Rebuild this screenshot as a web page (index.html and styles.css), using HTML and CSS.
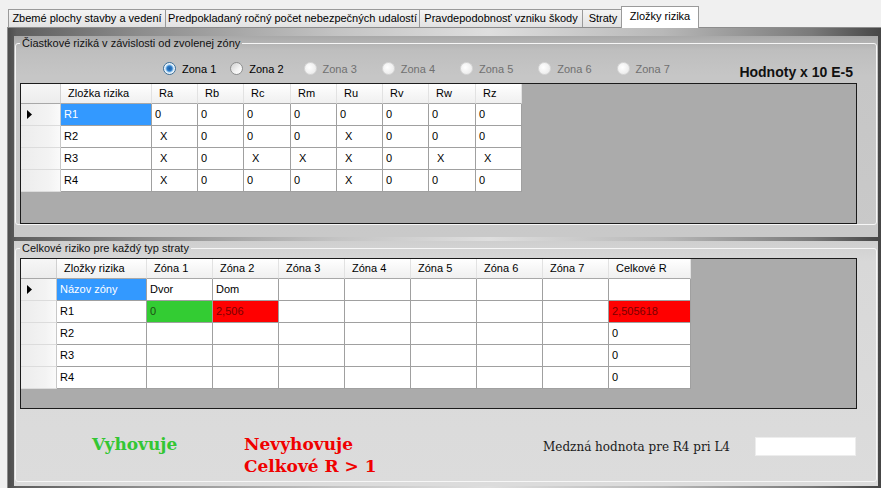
FILE: index.html
```html
<!DOCTYPE html>
<html lang="sk">
<head>
<meta charset="UTF-8">
<meta name="viewport" content="width=device-width, initial-scale=1.0">
<title>Zložky rizika</title>
<link rel="stylesheet" href="styles.css">
</head>
<body>
<div class="tabs">
  <div class="tab tab-plochy">Zbemé plochy stavby a vedení</div>
  <div class="tab tab-udalosti">Predpokladaný ročný počet nebezpečných udalostí</div>
  <div class="tab tab-skoda">Pravdepodobnosť vzniku škody</div>
  <div class="tab tab-straty">Straty</div>
  <div class="tab tab-active">Zložky rizika</div>
</div>

<div class="page">
  <!-- horna skupina: ciastkove rizika -->
  <div class="group group-zones">
    <fieldset>
      <legend>Čiastkové riziká v závislosti od zvolenej zóny</legend>
      <div class="zone-bar">
        <span class="radio checked"><span class="dot"></span>Zona 1</span>
        <span class="radio"><span class="dot"></span>Zona 2</span>
        <span class="radio disabled"><span class="dot"></span>Zona 3</span>
        <span class="radio disabled"><span class="dot"></span>Zona 4</span>
        <span class="radio disabled"><span class="dot"></span>Zona 5</span>
        <span class="radio disabled"><span class="dot"></span>Zona 6</span>
        <span class="radio disabled"><span class="dot"></span>Zona 7</span>
        <span class="units">Hodnoty x 10 E-5</span>
      </div>
      <div class="grid grid-parts">
        <div class="row head">
          <div class="rh"></div><div>Zložka rizika</div><div>Ra</div><div>Rb</div><div>Rc</div><div>Rm</div><div>Ru</div><div>Rv</div><div>Rw</div><div>Rz</div>
        </div>
        <div class="row">
          <div class="rh"><svg width="5" height="9" viewBox="0 0 5 9"><polygon points="0,0 5,4.5 0,9" fill="#000"/></svg></div>
          <div class="sel">R1</div><div>0</div><div>0</div><div>0</div><div>0</div><div>0</div><div>0</div><div>0</div><div>0</div>
        </div>
        <div class="row">
          <div class="rh"></div>
          <div>R2</div><div class="x">X</div><div>0</div><div>0</div><div>0</div><div class="x">X</div><div>0</div><div>0</div><div>0</div>
        </div>
        <div class="row">
          <div class="rh"></div>
          <div>R3</div><div class="x">X</div><div>0</div><div class="x">X</div><div class="x">X</div><div class="x">X</div><div>0</div><div class="x">X</div><div class="x">X</div>
        </div>
        <div class="row">
          <div class="rh"></div>
          <div>R4</div><div class="x">X</div><div>0</div><div>0</div><div>0</div><div class="x">X</div><div>0</div><div>0</div><div>0</div>
        </div>
      </div>
    </fieldset>
  </div>

  <!-- dolna skupina: celkove riziko -->
  <div class="group group-total">
    <fieldset>
      <legend>Celkové riziko pre každý typ straty</legend>
      <div class="grid grid-total">
        <div class="row head">
          <div class="rh"></div><div>Zložky rizika</div><div>Zóna 1</div><div>Zóna 2</div><div>Zóna 3</div><div>Zóna 4</div><div>Zóna 5</div><div>Zóna 6</div><div>Zóna 7</div><div>Celkové R</div>
        </div>
        <div class="row">
          <div class="rh"><svg width="5" height="9" viewBox="0 0 5 9"><polygon points="0,0 5,4.5 0,9" fill="#000"/></svg></div>
          <div class="sel">Názov zóny</div><div>Dvor</div><div>Dom</div><div></div><div></div><div></div><div></div><div></div><div></div>
        </div>
        <div class="row">
          <div class="rh"></div>
          <div>R1</div><div class="ok">0</div><div class="bad">2,506</div><div></div><div></div><div></div><div></div><div></div><div class="bad">2,505618</div>
        </div>
        <div class="row">
          <div class="rh"></div>
          <div>R2</div><div></div><div></div><div></div><div></div><div></div><div></div><div></div><div>0</div>
        </div>
        <div class="row">
          <div class="rh"></div>
          <div>R3</div><div></div><div></div><div></div><div></div><div></div><div></div><div></div><div>0</div>
        </div>
        <div class="row">
          <div class="rh"></div>
          <div>R4</div><div></div><div></div><div></div><div></div><div></div><div></div><div></div><div>0</div>
        </div>
      </div>
      <div class="verdict">
        <div class="verdict-ok">Vyhovuje</div>
        <div class="verdict-fail">Nevyhovuje<br>Celkové R &gt; 1</div>
        <div class="limit">
          <span class="limit-label">Medzná hodnota pre R4 pri L4</span>
          <input type="text" class="limit-input">
        </div>
      </div>
    </fieldset>
  </div>
</div>
</body>
</html>
```

FILE: styles.css
```css
body {
  margin: 0;
  width: 881px;
  height: 488px;
  overflow: hidden;
  background-color: #f0f0f0;
  font-family: 'Liberation Sans', Arial, sans-serif;
  font-size: 11px;
  color: #000;
}

/* zalozky */
.tabs {
  display: flex;
  align-items: flex-end;
  height: 20px;
  padding: 7px 0 0 8px;
}

.tab {
  box-sizing: border-box;
  height: 18px;
  line-height: 17px;
  text-align: center;
  white-space: nowrap;
  border: 1px solid #9a9a9a;
  border-bottom: none;
  margin-left: -1px;
  background: linear-gradient(#f4f4f4, #e2e2e2);
}

.tab:first-child {
  margin-left: 0;
}

.tab-plochy { width: 158px; }
.tab-udalosti { width: 255px; }
.tab-skoda { width: 164px; }
.tab-straty { width: 42px; }

.tab-active {
  width: 78px;
  height: 22px;
  line-height: 19px;
  margin: 0 -2px -1px -3px;
  background: #fff;
  position: relative; /* aby prekryla hornu ciaru stranky */
  z-index: 1;
}

/* stranka s tmavym ramom */
.page {
  box-sizing: border-box;
  height: 461px;
  margin-left: 7px;
  border-top: 1px solid #8d8d8d;
  border-left: 1px solid #8d8d8d;
  padding: 5px 3px 5px 6px;
  background: linear-gradient(to right, #4c4c4c 0, #5e5e5e 1%, #8c8c8c 15%, #c4c4c4 38%, #dedede 55%, #b8b8b8 75%, #7a7a7a 92%, #464646 100%);
}

.group {
  box-sizing: border-box;
}

.group-zones {
  height: 201px;
  background: linear-gradient(#a9a9a9, #bebebe 14px, #c6c6c6 40px, #c9c9c9);
}

.group-total {
  height: 245px;
  margin-top: 4px;
  background: linear-gradient(#cfcfcf, #d8d8d8 20px, #dcdcdc);
}

fieldset {
  margin: 3px 1px 1px;
  padding: 0;
  border: 1px solid #f6f6f6;
  border-radius: 3px;
}

legend {
  margin-left: 4px;
  padding: 0 2px;
  font-size: 11px;
  line-height: 14px;
  color: #111;
}

/* prepinace zon */
.zone-bar {
  box-sizing: border-box;
  display: flex;
  align-items: center;
  height: 33px;
  padding: 4px 0 0 147px;
}

.radio {
  display: flex;
  align-items: center;
  gap: 6px;
  margin-right: 25px;
  white-space: nowrap;
}

.radio:first-child {
  margin-right: 14px;
}

.radio:nth-child(2) {
  margin-right: 20px;
}

.dot {
  box-sizing: border-box;
  width: 13px;
  height: 13px;
  border-radius: 50%;
  border: 1px solid #8e8f8f;
  background: linear-gradient(135deg, #cfcfcf, #f4f4f4 60%, #fff);
}

.checked .dot {
  border-color: #3c6f98;
  background: radial-gradient(circle, #1d5fa6 0, #2d7bc8 2.5px, #8cc0ea 3.5px, #e4f0fa 4.5px, #fff 6px);
}

.disabled {
  color: #707070;
}

.disabled .dot {
  border-color: #d8d8d8;
  background: radial-gradient(circle at 40% 40%, #fff, #e6e6e6);
}

.units {
  align-self: flex-end;
  margin: 0 23px 3px auto;
  font-size: 14px;
  line-height: 16px;
  font-weight: bold;
  color: #111;
}

/* mriezky (DataGridView) */
.grid {
  box-sizing: border-box;
  margin: 0 19px 0 4px;
  border: 1px solid #1b1b1b;
  background-color: #ababab;
}

.grid-parts {
  height: 141px;
}

.grid-total {
  height: 151px;
  margin-top: 3px;
}

.row {
  display: grid;
  height: 22px;
}

.grid-parts .row {
  grid-template-columns: 40px 91px 46px 46px 47px 46px 46px 46px 47px 46px;
}

.grid-total .row {
  grid-template-columns: 36px 90px repeat(7, 66px) 82px;
}

.row > div {
  box-sizing: border-box;
  overflow: hidden;
  white-space: nowrap;
  padding-left: 3px;
  line-height: 21px;
  background-color: #fff;
  border-right: 1px solid #a0a0a0;
  border-bottom: 1px solid #a0a0a0;
}

.row.head {
  height: 20px;
}

.row.head > div {
  padding-left: 7px;
  line-height: 19px;
  background: linear-gradient(#ffffff, #f7f7f7 50%, #f0f0f0);
  border-right-color: #e2e2e2;
  border-bottom-color: #a8a8a8;
}

.row > .rh {
  display: flex;
  align-items: center;
  padding-left: 6px;
  background: linear-gradient(to right, #ececec, #f3f3f3 70%, #fafafa);
  border-right-color: #c8c8c8;
  border-bottom-color: #dcdcdc;
}

.row.head > .rh {
  background: linear-gradient(#f6f6f6, #ececec);
  border-right-color: #d0d0d0;
}

.row > .x {
  padding-left: 8px;
}

.row > .sel {
  background-color: #3399ff;
  color: #fff;
}

.row > .ok {
  background-color: #33cc33;
  color: #1f4d14;
}

.row > .bad {
  background-color: #ff0000;
  color: #7a0000;
}

/* vysledok */
.verdict {
  box-sizing: border-box;
  display: flex;
  align-items: flex-start;
  height: 72px;
  padding: 24px 0 0 76px;
}

.verdict-ok,
.verdict-fail {
  font-family: 'DejaVu Serif', 'Liberation Serif', serif;
  font-weight: bold;
  font-size: 17px;
  line-height: 22px;
}

.verdict-ok {
  width: 152px;
  color: #33c633;
}

.verdict-fail {
  color: #f00000;
}

.limit {
  display: flex;
  align-items: center;
  gap: 25px;
  margin: 4px 20px 0 auto;
}

.limit-label {
  font-family: 'DejaVu Serif', 'Liberation Serif', serif;
  font-size: 12px;
  color: #1a1a1a;
}

.limit-input {
  box-sizing: border-box;
  width: 101px;
  height: 19px;
  margin: 0;
  padding: 0 2px;
  border: 1px solid #ededed;
  background-color: #fff;
}
```
